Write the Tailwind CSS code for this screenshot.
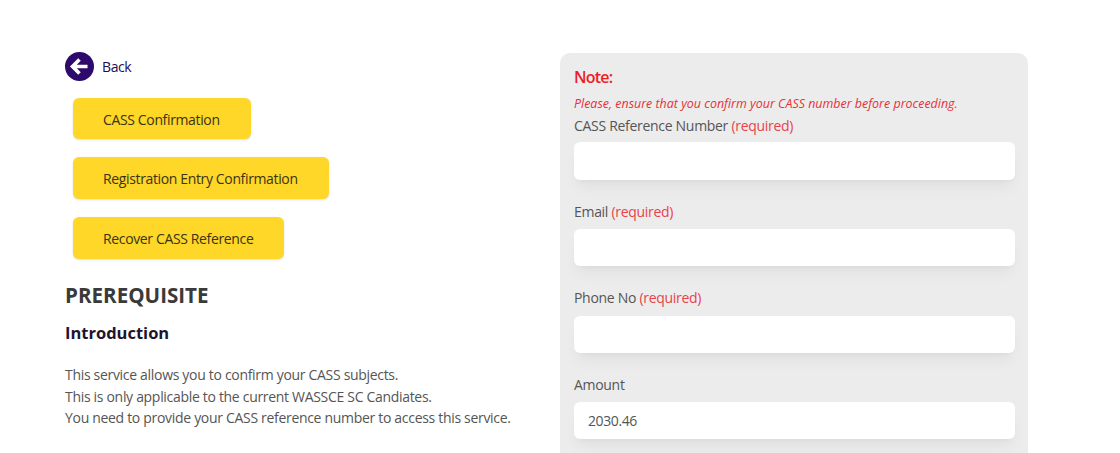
<!DOCTYPE html>
<html lang="en">
<head>
  <meta charset="UTF-8" />
  <title>CASS Confirmation</title>
  <script src="https://cdn.jsdelivr.net/npm/@tailwindcss/browser@4"></script>
</head>
<body class="h-[453px] overflow-hidden bg-white font-['Open_Sans',sans-serif] text-[#444]">
  <main class="flex items-start pl-[65px] pt-[52px]">

    <!-- Left column -->
    <section class="w-[495px] shrink-0">
      <a href="#" class="flex items-center gap-[8px] text-[14px] tracking-[-0.4px] leading-[28px] text-[#260a4f]">
        <svg class="w-[29px] h-[29px]" viewBox="0 0 29 29">
          <circle cx="14.5" cy="14.5" r="14.5" fill="#2d0a6b" />
          <path d="M14.5 7.5 L7.5 14.5 L14.5 21.5 M8 14.5 H22.5" fill="none" stroke="#fff" stroke-width="3.6" />
        </svg>
        Back
      </a>

      <div class="mt-[17px] ml-2 flex flex-col items-start gap-[18px] text-[14px] font-medium tracking-[-0.36px] text-[#3a3415]">
        <a href="#" class="flex items-center h-[41px] w-[178px] pl-[30px] pt-px rounded-md bg-[#fed728] shadow-sm">CASS Confirmation</a>
        <a href="#" class="flex items-center h-[42px] w-[256px] pl-[30px] rounded-md bg-[#fed728] shadow-sm">Registration Entry Confirmation</a>
        <a href="#" class="flex items-center h-[42px] w-[211px] pl-[30px] rounded-md bg-[#fed728] shadow-sm">Recover CASS Reference</a>
      </div>

      <h2 class="mt-[21px] text-[20.6px] leading-[30px] font-bold text-[#3a3a3a]">PREREQUISITE</h2>
      <h3 class="mt-[10px] text-[16.5px] leading-[26px] font-bold text-[#1c1530]">Introduction</h3>
      <p class="mt-[18px] text-[14px] tracking-[-0.31px] leading-[21.5px] text-[#555]">
        This service allows you to confirm your CASS subjects.<br />
        This is only applicable to the current WASSCE SC Candiates.<br />
        You need to provide your CASS reference number to access this service.
      </p>
    </section>

    <!-- Form panel -->
    <form class="w-[468px] h-[420px] mt-px rounded-[10px] bg-[#ececec] px-[14px] pt-[13px] text-[14px] tracking-[-0.3px] text-[#555]">
      <h4 class="text-[16px] tracking-[-0.8px] leading-[22px] font-semibold text-[#ee1c25]">Note:</h4>
      <p class="mt-[7px] text-[12.45px] tracking-normal leading-[18px] italic text-[#e8303a]">Please, ensure that you confirm your CASS number before proceeding.</p>

      <label class="mt-px block leading-[24px]">CASS Reference Number <span class="text-[#e8434b]">(required)</span></label>
      <input type="text" class="mt-[4px] block w-[441px] h-[38px] rounded-md bg-white shadow-lg shadow-black/5" />

      <label class="mt-[20px] block leading-[24px]">Email <span class="text-[#e8434b]">(required)</span></label>
      <input type="text" class="mt-[5px] block w-[441px] h-[37px] rounded-md bg-white shadow-lg shadow-black/5" />

      <label class="mt-[20px] block leading-[24px]">Phone No <span class="text-[#e8434b]">(required)</span></label>
      <input type="text" class="mt-[6px] block w-[441px] h-[37px] rounded-md bg-white shadow-lg shadow-black/5" />

      <label class="mt-[20px] block leading-[24px]">Amount</label>
      <input type="text" value="2030.46" class="mt-[5px] block w-[441px] h-[37px] rounded-md bg-white px-[14px] text-[14px] tracking-[-0.4px] shadow-lg shadow-black/5" />
    </form>
  </main>
</body>
</html>
